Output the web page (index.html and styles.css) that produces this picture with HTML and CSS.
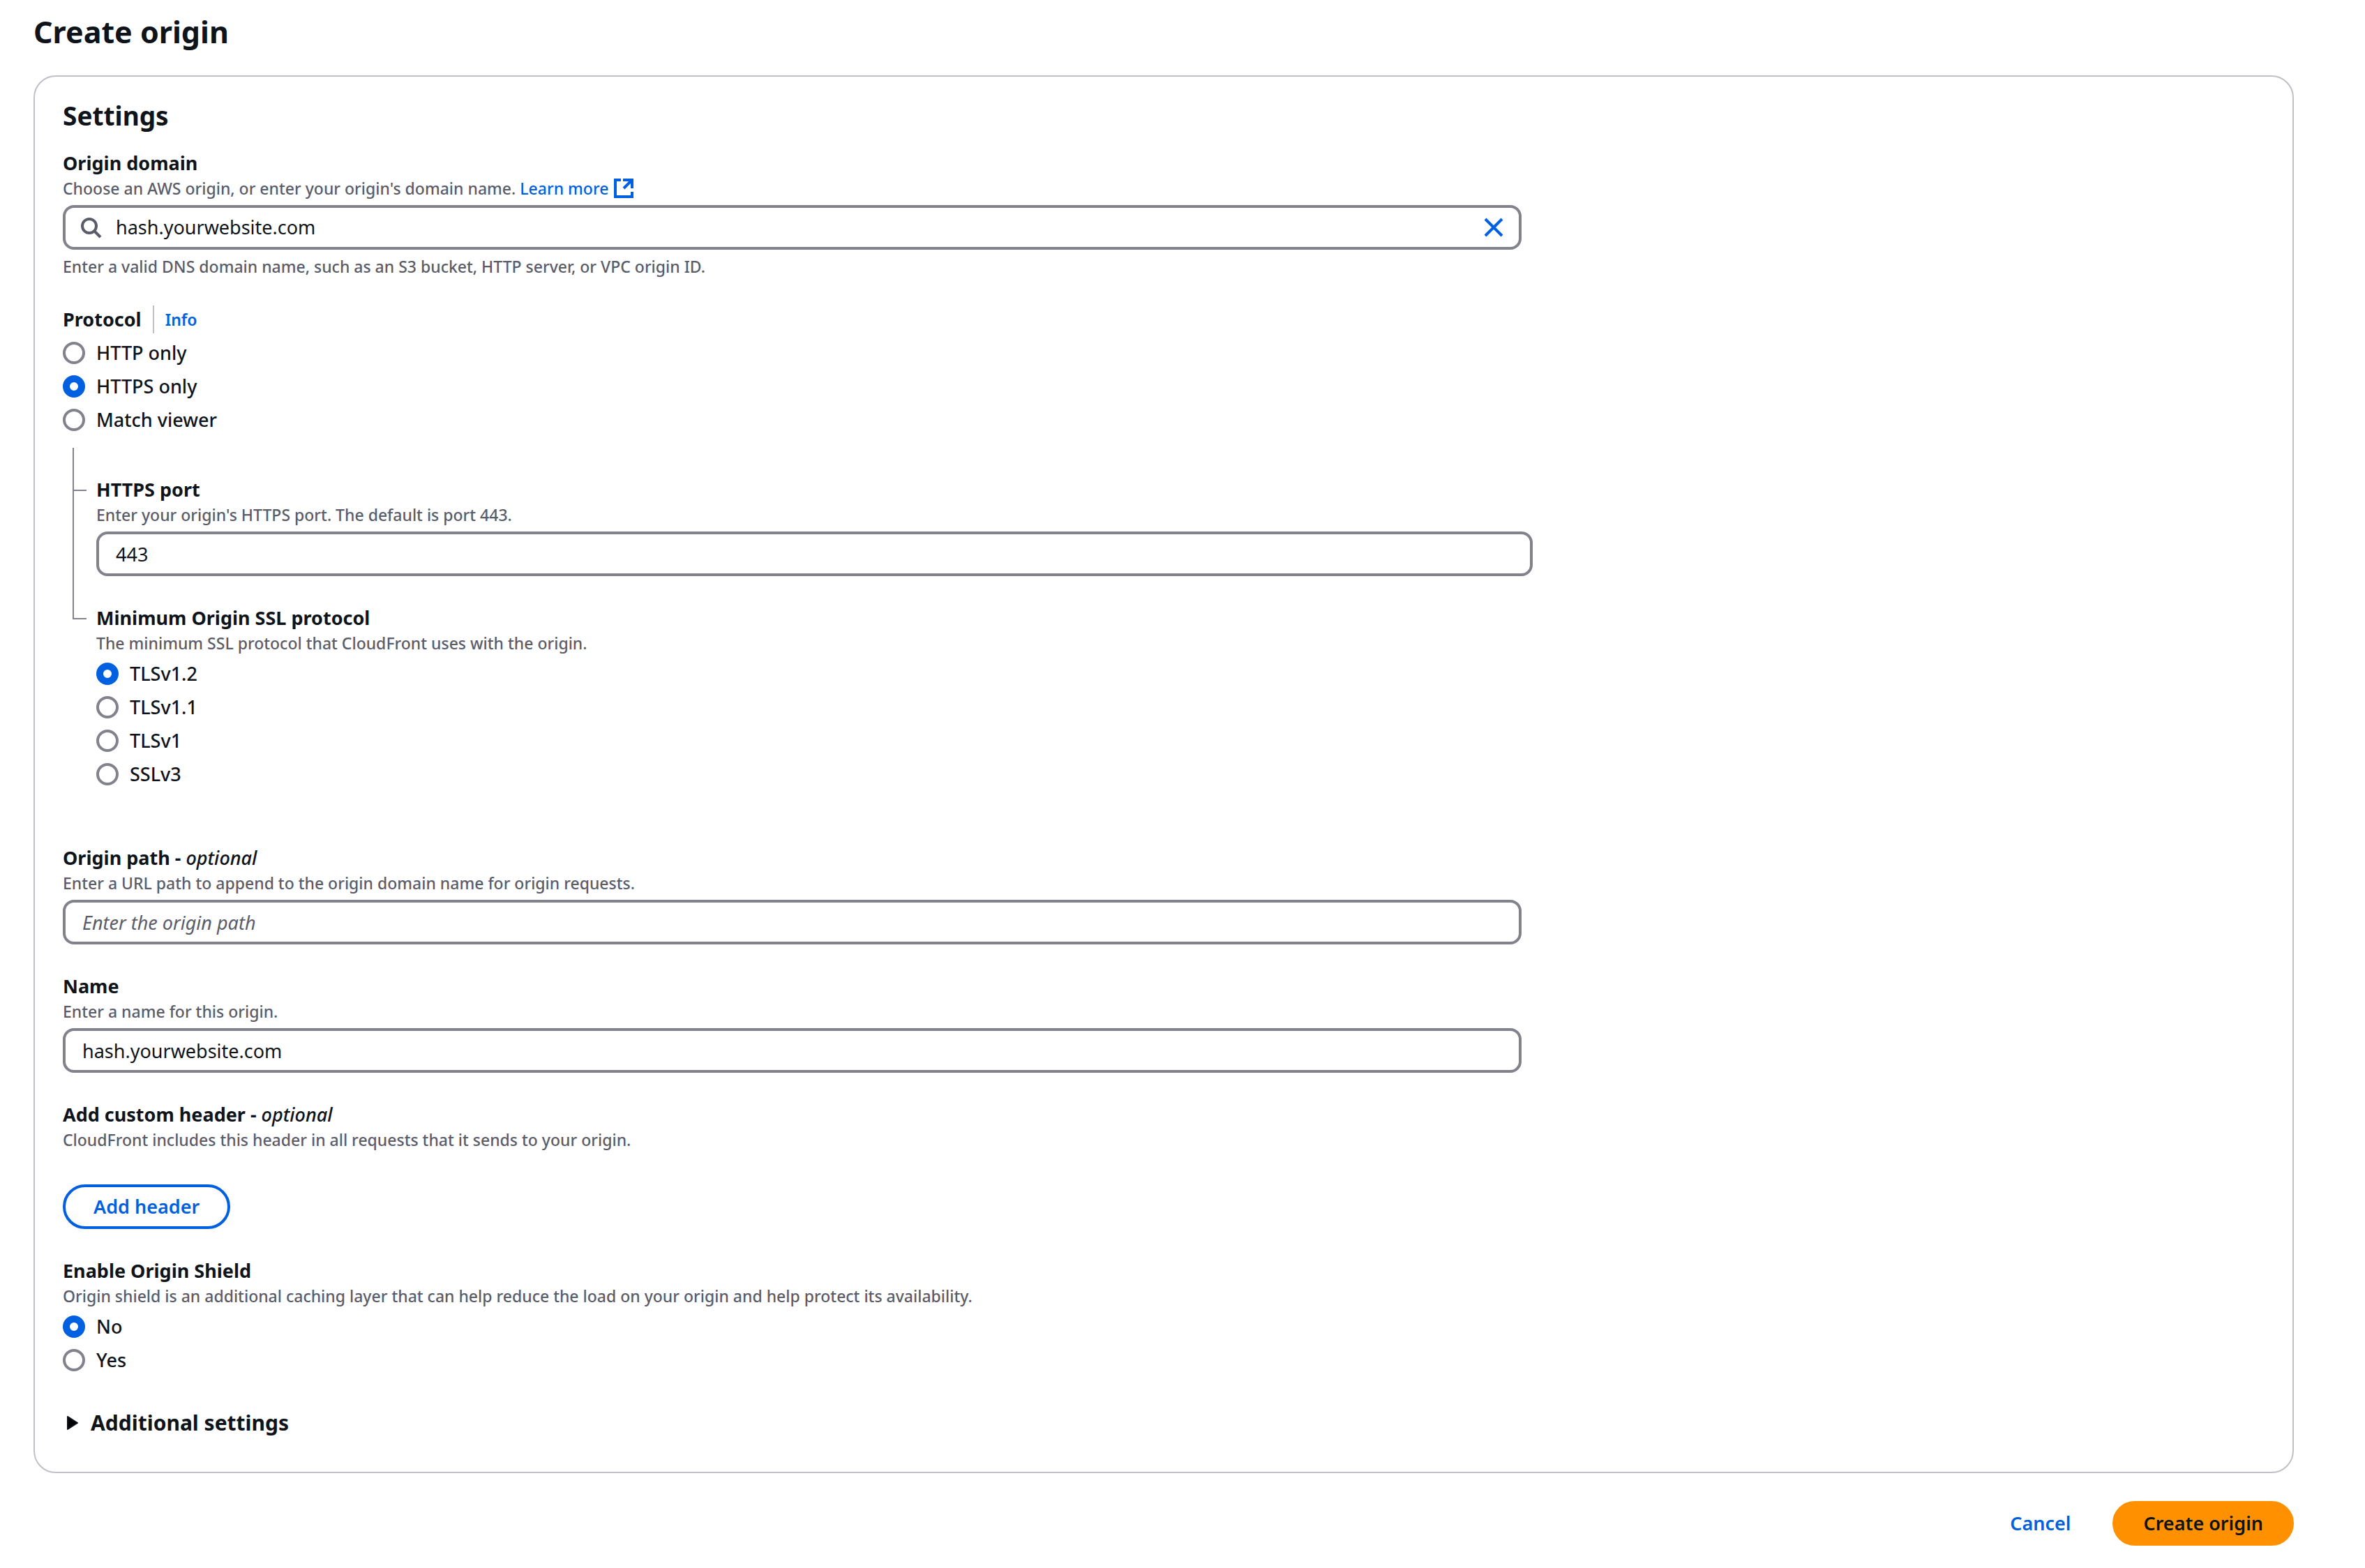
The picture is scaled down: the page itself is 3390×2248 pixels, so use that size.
FILE: index.html
```html
<!DOCTYPE html>
<html lang="en">
<head>
    <meta charset="utf-8">
    <title>Create origin</title>
    <link rel="stylesheet" href="styles.css">
</head>
<body>
    <form class="page">
        <h1>Create origin</h1>

        <section class="card">
            <h2>Settings</h2>

            <div class="field grid">
                <div class="column">
                    <label class="label" for="domain">Origin domain</label>
                    <p class="hint">Choose an AWS origin, or enter your origin's domain name.
                        <a class="learn" href="#">Learn more
                            <svg class="icon" viewBox="0 0 16 16" aria-hidden="true">
                                <path d="M6 2H2v12h12v-3.500"/>
                                <path d="M7.500 2H14v6"/>
                                <path d="m8 8 6-6"/>
                            </svg>
                        </a>
                    </p>
                    <div class="search">
                        <svg class="icon search-icon" viewBox="0 0 16 16" aria-hidden="true">
                            <circle cx="7" cy="7" r="5"/>
                            <path d="m15 15-4.500-4.500"/>
                        </svg>
                        <input type="text" id="domain" name="domain" value="hash.yourwebsite.com">
                        <button type="button" class="clear" aria-label="Clear">
                            <svg class="icon" viewBox="0 0 16 16" aria-hidden="true">
                                <path d="m2 2 12 12M14 2 2 14"/>
                            </svg>
                        </button>
                    </div>
                    <p class="hint constraint">Enter a valid DNS domain name, such as an S3 bucket, HTTP server, or VPC origin ID.</p>
                </div>
            </div>

            <div class="field" role="radiogroup" aria-labelledby="protocol-label">
                <div class="label-row">
                    <span class="label" id="protocol-label">Protocol</span>
                    <a class="info" href="#">Info</a>
                </div>
                <div class="radios">
                    <label class="radio"><input type="radio" name="protocol" value="http">HTTP only</label>
                    <label class="radio"><input type="radio" name="protocol" value="https" checked>HTTPS only</label>
                    <label class="radio"><input type="radio" name="protocol" value="match">Match viewer</label>
                </div>
            </div>

            <div class="nested">
                <div class="branch grid">
                    <div class="column">
                        <label class="label" for="port">HTTPS port</label>
                        <p class="hint">Enter your origin's HTTPS port. The default is port 443.</p>
                        <input class="box" type="text" id="port" name="port" value="443">
                    </div>
                </div>
                <div class="branch" role="radiogroup" aria-labelledby="ssl-label">
                    <span class="label" id="ssl-label">Minimum Origin SSL protocol</span>
                    <p class="hint">The minimum SSL protocol that CloudFront uses with the origin.</p>
                    <div class="radios">
                        <label class="radio"><input type="radio" name="ssl" value="tls12" checked>TLSv1.2</label>
                        <label class="radio"><input type="radio" name="ssl" value="tls11">TLSv1.1</label>
                        <label class="radio"><input type="radio" name="ssl" value="tls1">TLSv1</label>
                        <label class="radio"><input type="radio" name="ssl" value="ssl3">SSLv3</label>
                    </div>
                </div>
            </div>

            <div class="field grid">
                <div class="column">
                    <label class="label" for="path">Origin path - <i>optional</i></label>
                    <p class="hint">Enter a URL path to append to the origin domain name for origin requests.</p>
                    <input class="box" type="text" id="path" name="path" placeholder="Enter the origin path">
                </div>
            </div>

            <div class="field grid">
                <div class="column">
                    <label class="label" for="name">Name</label>
                    <p class="hint">Enter a name for this origin.</p>
                    <input class="box" type="text" id="name" name="name" value="hash.yourwebsite.com">
                </div>
            </div>

            <div class="field">
                <span class="label">Add custom header - <i>optional</i></span>
                <p class="hint">CloudFront includes this header in all requests that it sends to your origin.</p>
                <button type="button" class="btn btn-outline">Add header</button>
            </div>

            <div class="field" role="radiogroup" aria-labelledby="shield-label">
                <span class="label" id="shield-label">Enable Origin Shield</span>
                <p class="hint">Origin shield is an additional caching layer that can help reduce the load on your origin and help protect its availability.</p>
                <div class="radios">
                    <label class="radio"><input type="radio" name="shield" value="no" checked>No</label>
                    <label class="radio"><input type="radio" name="shield" value="yes">Yes</label>
                </div>
            </div>

            <button type="button" class="expand" aria-expanded="false">
                <svg class="caret" viewBox="0 0 16 20" aria-hidden="true">
                    <path d="M1 1v18l14-9z"/>
                </svg>
                Additional settings
            </button>
        </section>

        <div class="actions">
            <button type="button" class="btn btn-link">Cancel</button>
            <button type="submit" class="btn btn-primary">Create origin</button>
        </div>
    </form>
</body>
</html>
```
FILE: styles.css
```css
* {
    box-sizing: border-box;
}

body {
    margin: 0;
    background: #ffffff;
    color: #0f141a;
    font-family: "Noto Sans", "Open Sans", sans-serif;
    font-size: 27px;
    line-height: 40px;
}

.page {
    padding: 16px 102px 32px 48px;
}

h1, h2, p {
    margin: 0;
}

h1 {
    font-size: 43px;
    line-height: 60px;
    margin-bottom: 32px;
}

h2 {
    font-size: 37px;
    line-height: 48px;
    margin-bottom: 24px;
}

a {
    color: #0060df;
    text-decoration: none;
}

input, button {
    font: inherit;
    color: inherit;
}

.card {
    border: 2px solid #c0c0c8;
    border-radius: 32px;
    padding: 32px 40px 40px;
}

.grid {
    display: grid;
    grid-template-columns: repeat(3, 1fr);
    column-gap: 40px;
}

.column {
    grid-column: span 2;
}

.field {
    margin-bottom: 40px;
}

.label {
    display: block;
    font-weight: bold;
}

.label i {
    font-weight: 500;
}

.hint {
    color: #5a5d69;
    font-size: 23px;
    font-weight: 500;
    line-height: 32px;
    margin-bottom: 8px;
}

.constraint {
    margin: 8px 0 0;
}

.icon {
    width: 32px;
    height: 32px;
    fill: none;
    stroke: currentColor;
    stroke-width: 2;
    vertical-align: top;
}

.box, .search {
    width: 100%;
    height: 64px;
    border: 4px solid #82828c;
    border-radius: 16px;
    background: #ffffff;
}

.box {
    display: block;
    padding: 0 24px;
}

.box::placeholder {
    color: #5a5d69;
    font-style: italic;
    opacity: 1;
}

.search {
    display: flex;
    align-items: center;
    padding: 0 20px;
}

.search-icon {
    color: #5a5d69;
}

.search input {
    flex: 1;
    min-width: 0;
    border: none;
    outline: none;
    padding: 0 20px;
}

.clear {
    display: flex;
    border: none;
    background: none;
    padding: 0;
    color: #0060df;
}

.label-row {
    display: flex;
    align-items: center;
    margin-bottom: 8px;
}

.info {
    border-left: 2px solid #c0c0c8;
    margin-left: 16px;
    padding-left: 16px;
    font-size: 23px;
    font-weight: 600;
}

.radios {
    display: grid;
    justify-items: start;
    gap: 8px;
}

.radio {
    display: flex;
    align-items: center;
    gap: 16px;
    font-weight: 500;
}

.radio input {
    appearance: none;
    width: 32px;
    height: 32px;
    margin: 0;
    border: 4px solid #82828c;
    border-radius: 50%;
    background: #ffffff;
}

.radio input:checked {
    border: 10px solid #0060df;
}

/* tree of settings that belong to the chosen protocol */
.nested {
    position: relative;
    margin: -20px 0 80px;
    padding: 40px 0 0 48px;
}

.branch {
    position: relative;
    margin-bottom: 40px;
}

.branch::before {
    content: "";
    position: absolute;
    top: 20px;
    left: -34px;
    width: 20px;
    border-top: 2px solid #82828c;
}

.nested::before {
    content: "";
    position: absolute;
    top: 0;
    left: 14px;
    height: 246px;
    border-left: 2px solid #82828c;
}

.btn {
    height: 64px;
    border: 4px solid transparent;
    border-radius: 40px;
    padding: 0 40px;
    background: none;
    font-weight: 600;
    cursor: pointer;
}

.btn-outline {
    display: block;
    margin-top: 48px;
    border-color: #0060df;
    color: #0060df;
}

.btn-link {
    color: #0060df;
}

.btn-primary {
    border-color: #ff9000;
    background: #ff9000;
}

.expand {
    display: flex;
    align-items: center;
    border: none;
    background: none;
    padding: 10px 0;
    gap: 18px;
    font-size: 30px;
    font-weight: bold;
}

.caret {
    width: 16px;
    height: 20px;
    margin-left: 6px;
    stroke: currentColor;
    stroke-width: 2;
    stroke-linejoin: round;
}

.actions {
    display: flex;
    justify-content: flex-end;
    gap: 16px;
    margin-top: 40px;
}
```
